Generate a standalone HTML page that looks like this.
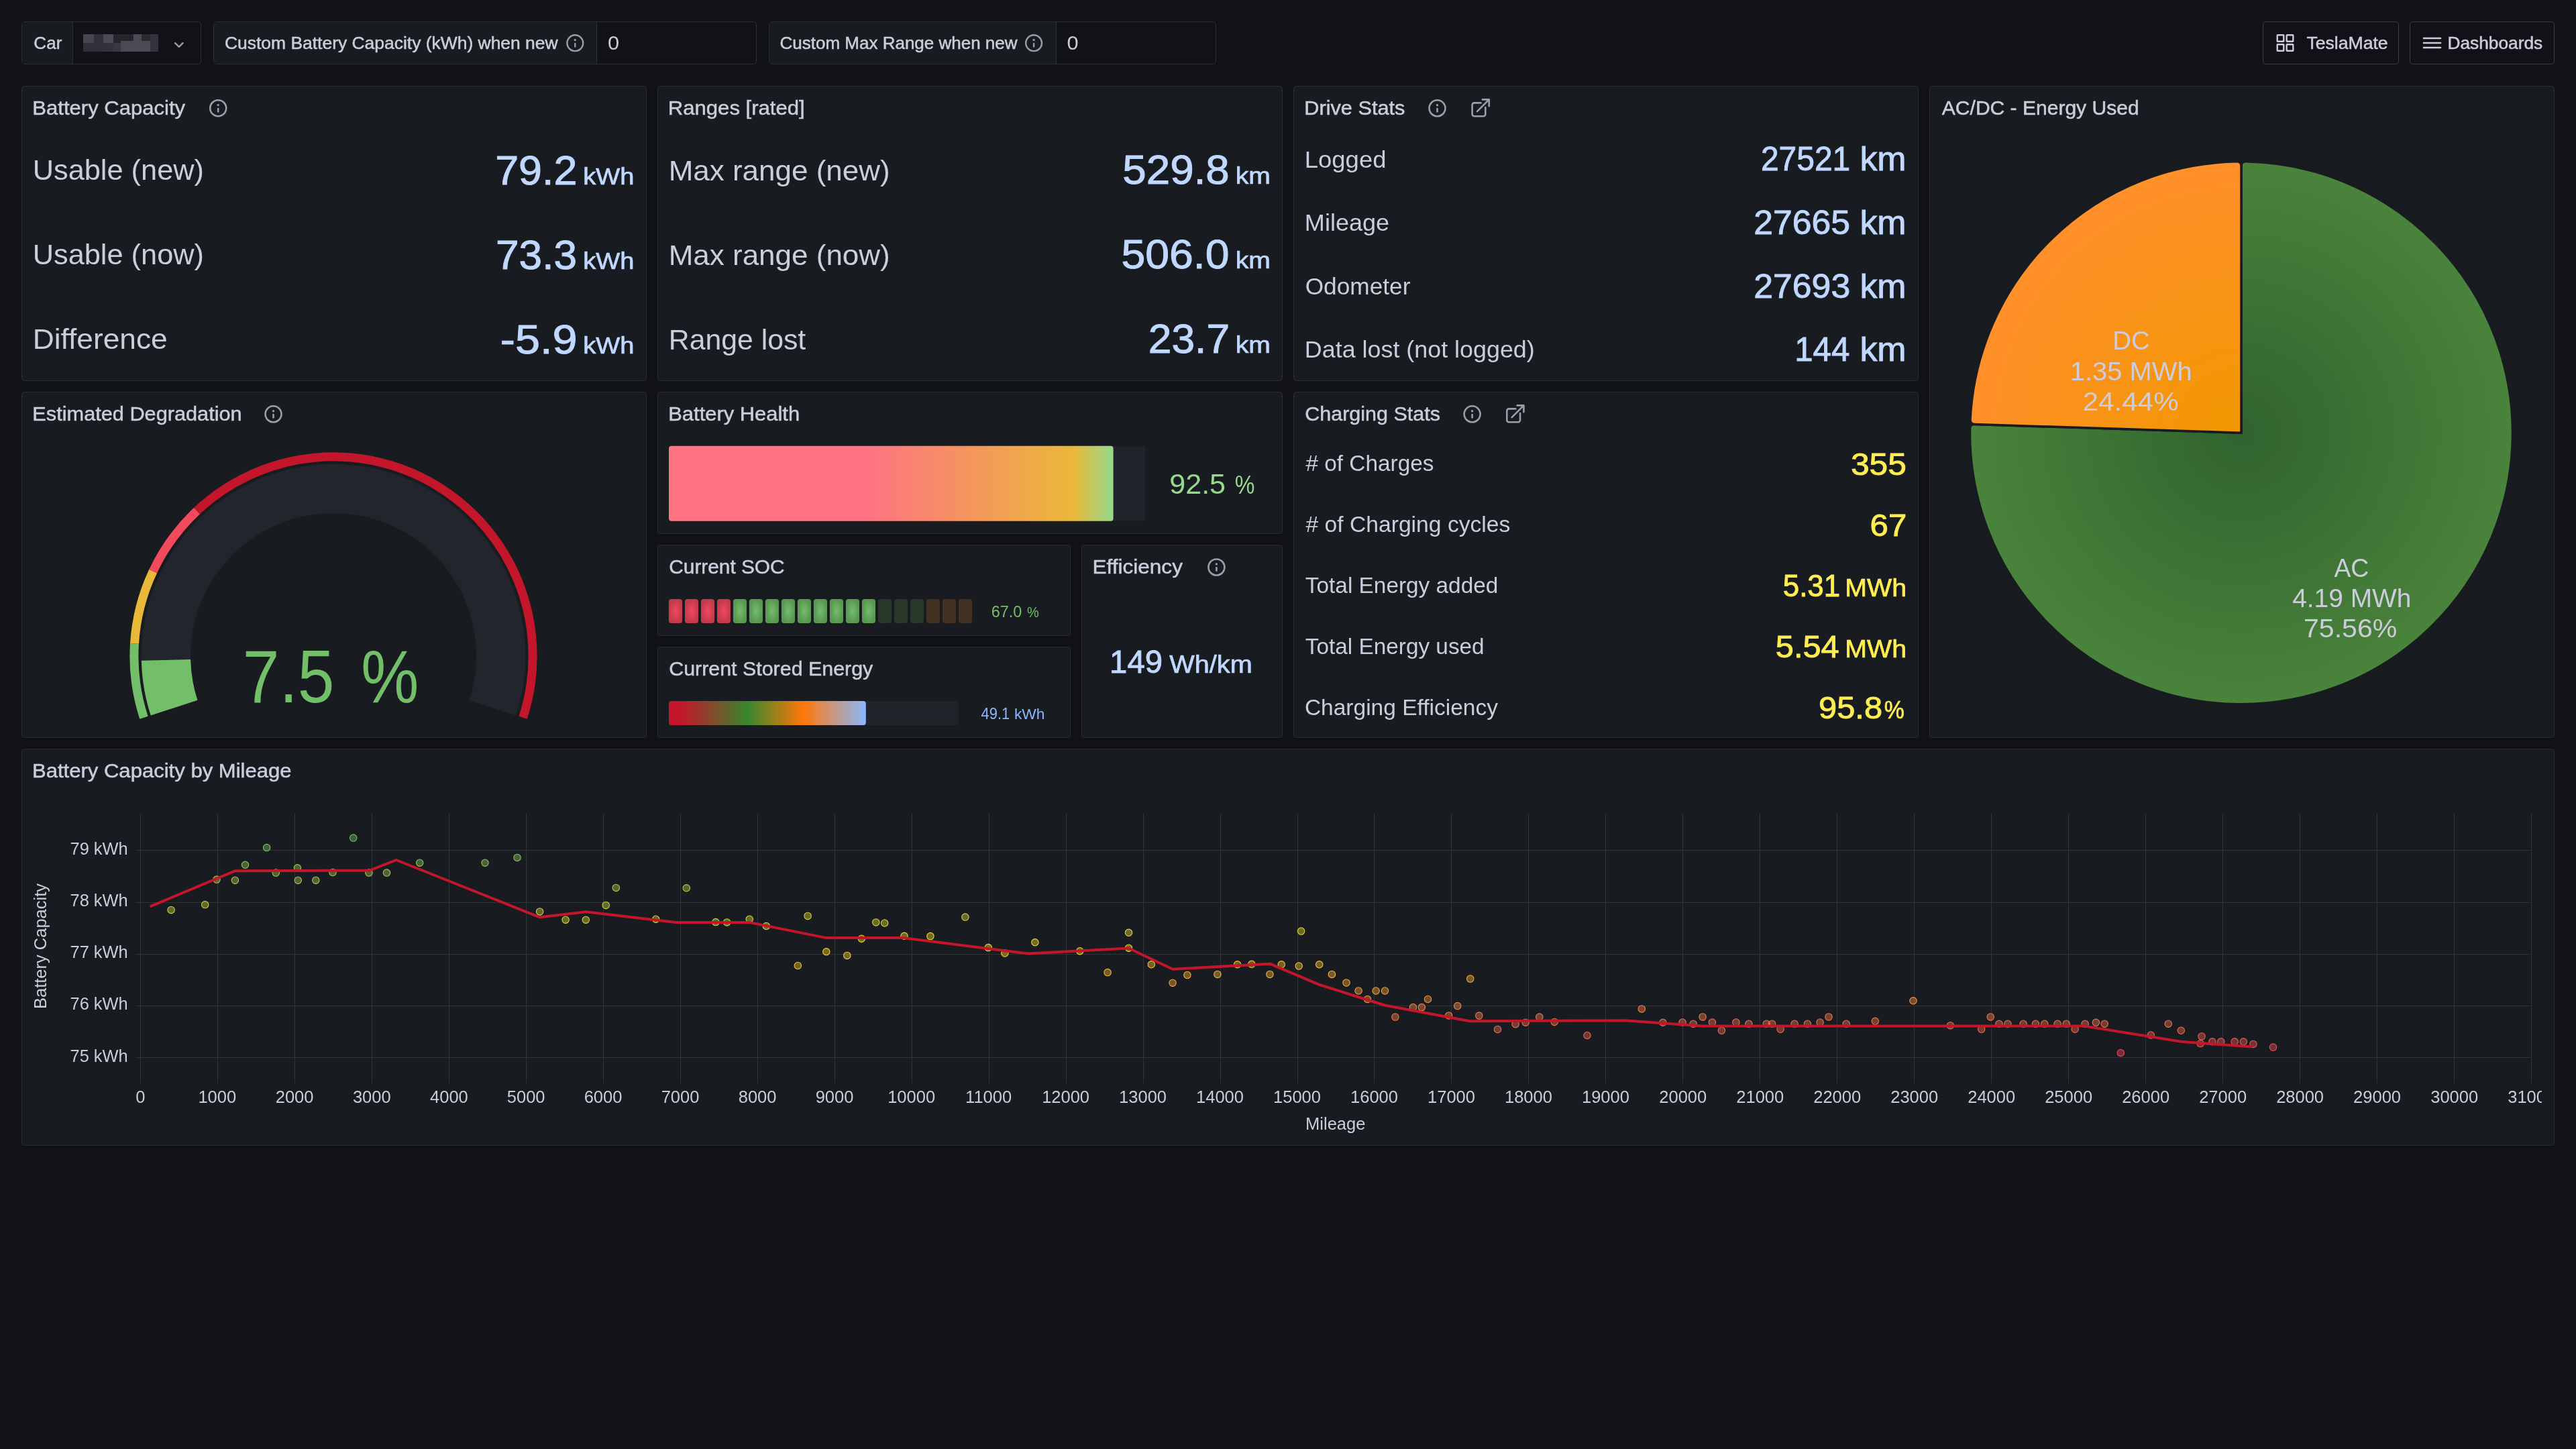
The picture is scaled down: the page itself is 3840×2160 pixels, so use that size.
<!DOCTYPE html>
<html><head><meta charset="utf-8"><title>Battery Health - TeslaMate</title>
<style>html,body{margin:0;padding:0;background:#111217;width:3840px;height:2160px;overflow:hidden}
svg{display:block;font-family:"Liberation Sans",sans-serif;will-change:transform}</style></head>
<body><svg width="3840" height="2160" viewBox="0 0 3840 2160">
<defs><linearGradient id="gh" x1="997" y1="0" x2="1659.6" y2="0" gradientUnits="userSpaceOnUse"><stop offset="0" stop-color="#ff7383"/><stop offset="0.44" stop-color="#ff7383"/><stop offset="0.91" stop-color="#eab839"/><stop offset="1" stop-color="#96d98d"/></linearGradient><radialGradient id="gr"><stop offset="0" stop-color="#f2495c"/><stop offset="1" stop-color="#c23a4b"/></radialGradient><radialGradient id="gg"><stop offset="0" stop-color="#73bf69"/><stop offset="1" stop-color="#5b9653"/></radialGradient><linearGradient id="ge" x1="997" y1="0" x2="1290.8" y2="0" gradientUnits="userSpaceOnUse"><stop offset="0" stop-color="#c4162a"/><stop offset="0.06" stop-color="#c4162a"/><stop offset="0.40" stop-color="#37872d"/><stop offset="0.68" stop-color="#ff780a"/><stop offset="1" stop-color="#8ab8ff"/></linearGradient><radialGradient id="pa" cx="3341.0" cy="645.3" r="404.5" gradientUnits="userSpaceOnUse"><stop offset="0" stop-color="#30632e"/><stop offset="1" stop-color="#4a833b"/></radialGradient><radialGradient id="pd" cx="3341.0" cy="645.3" r="404.5" gradientUnits="userSpaceOnUse"><stop offset="0" stop-color="#f29800"/><stop offset="1" stop-color="#ff8f2a"/></radialGradient></defs>
<rect x="0" y="0" width="3840" height="2160" fill="#111217"/>
<rect x="32.5" y="32.5" width="267" height="63" fill="#111217" rx="4" stroke="#2c2e34" stroke-width="1" />
<rect x="33" y="33" width="75.5" height="62" fill="#181b1f" />
<line x1="108.5" y1="33" x2="108.5" y2="95" stroke="#2c2e34" stroke-width="1"/>
<text x="50.38" y="73.00" font-size="25.50" fill="#ccccdc" textLength="41.95" lengthAdjust="spacingAndGlyphs" stroke="#ccccdc" stroke-width="0.5">Car</text>
<rect x="124" y="51" width="16" height="13" fill="#46464f" />
<rect x="140" y="51" width="14" height="13" fill="#30303a" />
<rect x="154" y="51" width="15" height="13" fill="#4a4a54" />
<rect x="169" y="51" width="11" height="13" fill="#25262c" />
<rect x="180" y="51" width="19" height="10" fill="#25262c" />
<rect x="199" y="51" width="12" height="10" fill="#4b4b55" />
<rect x="211" y="51" width="13" height="10" fill="#2a2b30" />
<rect x="224" y="51" width="12" height="26" fill="#33333d" />
<rect x="124" y="64" width="16" height="13" fill="#30303a" />
<rect x="140" y="64" width="14" height="13" fill="#30303a" />
<rect x="154" y="64" width="15" height="13" fill="#32323c" />
<rect x="169" y="64" width="11" height="13" fill="#383842" />
<rect x="180" y="61" width="44" height="16" fill="#4a4a54" />
<path d="M261,64.2 L266.8,69.8 L272.6,64.2" stroke="#9d9eab" stroke-width="2.3" fill="none" stroke-linecap="round" stroke-linejoin="round"/>
<rect x="318.5" y="32.5" width="809" height="63" fill="#111217" rx="4" stroke="#2c2e34" stroke-width="1" />
<rect x="319" y="33" width="570" height="62" fill="#181b1f" />
<line x1="889.5" y1="33" x2="889.5" y2="95" stroke="#2c2e34" stroke-width="1"/>
<text x="334.96" y="73.00" font-size="25.50" fill="#ccccdc" textLength="496.68" lengthAdjust="spacingAndGlyphs" stroke="#ccccdc" stroke-width="0.5">Custom Battery Capacity (kWh) when new</text>
<g stroke="#9d9eab" fill="none" stroke-width="2.4" stroke-linecap="round"><circle cx="857.3" cy="64.2" r="11.9"/><line x1="857.3" y1="65.0" x2="857.3" y2="69.4"/></g><circle cx="857.3" cy="59.6" r="1.7" fill="#9d9eab"/>
<text x="906.00" y="74.00" font-size="29.50" fill="#ccccdc" textLength="17.10" lengthAdjust="spacingAndGlyphs" >0</text>
<rect x="1146.5" y="32.5" width="666" height="63" fill="#111217" rx="4" stroke="#2c2e34" stroke-width="1" />
<rect x="1147" y="33" width="427" height="62" fill="#181b1f" />
<line x1="1574.5" y1="33" x2="1574.5" y2="95" stroke="#2c2e34" stroke-width="1"/>
<text x="1162.58" y="73.00" font-size="25.50" fill="#ccccdc" textLength="353.96" lengthAdjust="spacingAndGlyphs" stroke="#ccccdc" stroke-width="0.5">Custom Max Range when new</text>
<g stroke="#9d9eab" fill="none" stroke-width="2.4" stroke-linecap="round"><circle cx="1541.1" cy="64.2" r="11.9"/><line x1="1541.1" y1="65.0" x2="1541.1" y2="69.4"/></g><circle cx="1541.1" cy="59.6" r="1.7" fill="#9d9eab"/>
<text x="1590.60" y="74.00" font-size="29.50" fill="#ccccdc" textLength="17.10" lengthAdjust="spacingAndGlyphs" >0</text>
<rect x="3373.5" y="32.5" width="202" height="63" fill="none" rx="4" stroke="#3b3d44" stroke-width="1" />
<rect x="3592.5" y="32.5" width="215" height="63" fill="none" rx="4" stroke="#3b3d44" stroke-width="1" />
<rect x="3394.7" y="52.2" width="9.6" height="9.6" fill="none" rx="0.5" stroke="#ccccdc" stroke-width="2.4" />
<rect x="3408.7" y="52.2" width="9.6" height="9.6" fill="none" rx="0.5" stroke="#ccccdc" stroke-width="2.4" />
<rect x="3394.7" y="66.2" width="9.6" height="9.6" fill="none" rx="0.5" stroke="#ccccdc" stroke-width="2.4" />
<rect x="3408.7" y="66.2" width="9.6" height="9.6" fill="none" rx="0.5" stroke="#ccccdc" stroke-width="2.4" />
<text x="3438.50" y="73.00" font-size="25.50" fill="#ccccdc" textLength="121.08" lengthAdjust="spacingAndGlyphs" stroke="#ccccdc" stroke-width="0.5">TeslaMate</text>
<line x1="3613" y1="57" x2="3638" y2="57" stroke="#ccccdc" stroke-width="2.6" stroke-linecap="round"/>
<line x1="3613" y1="64" x2="3638" y2="64" stroke="#ccccdc" stroke-width="2.6" stroke-linecap="round"/>
<line x1="3613" y1="71" x2="3638" y2="71" stroke="#ccccdc" stroke-width="2.6" stroke-linecap="round"/>
<text x="3648.44" y="73.00" font-size="25.50" fill="#ccccdc" textLength="141.81" lengthAdjust="spacingAndGlyphs" stroke="#ccccdc" stroke-width="0.5">Dashboards</text>
<rect x="32.5" y="128.5" width="931" height="439" fill="#181b1f" rx="4" stroke="#2c2e34" stroke-width="1" />
<rect x="980.5" y="128.5" width="931" height="439" fill="#181b1f" rx="4" stroke="#2c2e34" stroke-width="1" />
<rect x="1928.5" y="128.5" width="931" height="439" fill="#181b1f" rx="4" stroke="#2c2e34" stroke-width="1" />
<rect x="2876.5" y="128.5" width="931" height="971" fill="#181b1f" rx="4" stroke="#2c2e34" stroke-width="1" />
<rect x="32.5" y="584.5" width="931" height="515" fill="#181b1f" rx="4" stroke="#2c2e34" stroke-width="1" />
<rect x="980.5" y="584.5" width="931" height="211" fill="#181b1f" rx="4" stroke="#2c2e34" stroke-width="1" />
<rect x="980.5" y="812.5" width="615" height="135" fill="#181b1f" rx="4" stroke="#2c2e34" stroke-width="1" />
<rect x="980.5" y="964.5" width="615" height="135" fill="#181b1f" rx="4" stroke="#2c2e34" stroke-width="1" />
<rect x="1612.5" y="812.5" width="299" height="287" fill="#181b1f" rx="4" stroke="#2c2e34" stroke-width="1" />
<rect x="1928.5" y="584.5" width="931" height="515" fill="#181b1f" rx="4" stroke="#2c2e34" stroke-width="1" />
<rect x="32.5" y="1116.5" width="3775" height="591" fill="#181b1f" rx="4" stroke="#2c2e34" stroke-width="1" />
<text x="48.35" y="171.00" font-size="29.50" fill="#ccccdc" textLength="227.71" lengthAdjust="spacingAndGlyphs" stroke="#ccccdc" stroke-width="0.5">Battery Capacity</text>
<g stroke="#9d9eab" fill="none" stroke-width="2.6" stroke-linecap="round"><circle cx="325.2" cy="161.2" r="12.0"/><line x1="325.2" y1="162.0" x2="325.2" y2="166.39999999999998"/></g><circle cx="325.2" cy="156.6" r="1.7" fill="#9d9eab"/>
<text x="995.75" y="171.00" font-size="29.50" fill="#ccccdc" textLength="203.97" lengthAdjust="spacingAndGlyphs" stroke="#ccccdc" stroke-width="0.5">Ranges [rated]</text>
<text x="1944.28" y="171.00" font-size="29.50" fill="#ccccdc" textLength="150.13" lengthAdjust="spacingAndGlyphs" stroke="#ccccdc" stroke-width="0.5">Drive Stats</text>
<g stroke="#9d9eab" fill="none" stroke-width="2.6" stroke-linecap="round"><circle cx="2142.5" cy="161.3" r="12.0"/><line x1="2142.5" y1="162.10000000000002" x2="2142.5" y2="166.5"/></g><circle cx="2142.5" cy="156.70000000000002" r="1.7" fill="#9d9eab"/>
<g stroke="#9d9eab" fill="none" stroke-width="2.6" stroke-linecap="round" stroke-linejoin="round"><path d="M2207.6,153.4 H2197.6 a3,3 0 0 0 -3,3 V170.20000000000002 a3,3 0 0 0 3,3 H2211.2999999999997 a3,3 0 0 0 3,-3 V160.0"/><path d="M2202.0,166.10000000000002 L2219.7,148.4 M2209.9,148.4 H2219.7 V158.20000000000002"/></g>
<text x="2894.84" y="171.00" font-size="29.50" fill="#ccccdc" textLength="293.79" lengthAdjust="spacingAndGlyphs" stroke="#ccccdc" stroke-width="0.5">AC/DC - Energy Used</text>
<text x="48.38" y="627.00" font-size="29.50" fill="#ccccdc" textLength="312.31" lengthAdjust="spacingAndGlyphs" stroke="#ccccdc" stroke-width="0.5">Estimated Degradation</text>
<g stroke="#9d9eab" fill="none" stroke-width="2.6" stroke-linecap="round"><circle cx="407.5" cy="617.3" r="12.0"/><line x1="407.5" y1="618.0999999999999" x2="407.5" y2="622.5"/></g><circle cx="407.5" cy="612.6999999999999" r="1.7" fill="#9d9eab"/>
<text x="996.26" y="627.00" font-size="29.50" fill="#ccccdc" textLength="195.84" lengthAdjust="spacingAndGlyphs" stroke="#ccccdc" stroke-width="0.5">Battery Health</text>
<text x="997.29" y="855.00" font-size="29.50" fill="#ccccdc" textLength="172.25" lengthAdjust="spacingAndGlyphs" stroke="#ccccdc" stroke-width="0.5">Current SOC</text>
<text x="997.26" y="1007.00" font-size="29.50" fill="#ccccdc" textLength="304.00" lengthAdjust="spacingAndGlyphs" stroke="#ccccdc" stroke-width="0.5">Current Stored Energy</text>
<text x="1628.41" y="855.00" font-size="29.50" fill="#ccccdc" textLength="134.55" lengthAdjust="spacingAndGlyphs" stroke="#ccccdc" stroke-width="0.5">Efficiency</text>
<g stroke="#9d9eab" fill="none" stroke-width="2.6" stroke-linecap="round"><circle cx="1813.4" cy="845.5" r="12.0"/><line x1="1813.4" y1="846.3" x2="1813.4" y2="850.7"/></g><circle cx="1813.4" cy="840.9" r="1.7" fill="#9d9eab"/>
<text x="1945.25" y="627.00" font-size="29.50" fill="#ccccdc" textLength="201.65" lengthAdjust="spacingAndGlyphs" stroke="#ccccdc" stroke-width="0.5">Charging Stats</text>
<g stroke="#9d9eab" fill="none" stroke-width="2.6" stroke-linecap="round"><circle cx="2194.6" cy="617.3" r="12.0"/><line x1="2194.6" y1="618.0999999999999" x2="2194.6" y2="622.5"/></g><circle cx="2194.6" cy="612.6999999999999" r="1.7" fill="#9d9eab"/>
<g stroke="#9d9eab" fill="none" stroke-width="2.6" stroke-linecap="round" stroke-linejoin="round"><path d="M2259.3,609.4 H2249.3 a3,3 0 0 0 -3,3 V626.1999999999999 a3,3 0 0 0 3,3 H2263.0 a3,3 0 0 0 3,-3 V616.0"/><path d="M2253.7000000000003,622.0999999999999 L2271.4,604.4 M2261.6000000000004,604.4 H2271.4 V614.1999999999999"/></g>
<text x="47.95" y="1159.00" font-size="29.50" fill="#ccccdc" textLength="386.63" lengthAdjust="spacingAndGlyphs" stroke="#ccccdc" stroke-width="0.5">Battery Capacity by Mileage</text>
<text x="48.66" y="268.00" font-size="42.50" fill="#ccccdc" textLength="255.33" lengthAdjust="spacingAndGlyphs" >Usable (new)</text>
<text x="48.66" y="394.00" font-size="42.50" fill="#ccccdc" textLength="255.33" lengthAdjust="spacingAndGlyphs" >Usable (now)</text>
<text x="48.67" y="520.00" font-size="42.50" fill="#ccccdc" textLength="201.00" lengthAdjust="spacingAndGlyphs" >Difference</text>
<text x="738.18" y="275.00" font-size="61.50" fill="#c0d8ff" textLength="122.28" lengthAdjust="spacingAndGlyphs"  stroke="#c0d8ff" stroke-width="1.0">79.2</text>
<text x="869.33" y="275.00" font-size="35.50" fill="#c0d8ff" textLength="76.14" lengthAdjust="spacingAndGlyphs"  stroke="#c0d8ff" stroke-width="0.7">kWh</text>
<text x="738.91" y="401.00" font-size="61.50" fill="#c0d8ff" textLength="121.13" lengthAdjust="spacingAndGlyphs"  stroke="#c0d8ff" stroke-width="1.0">73.3</text>
<text x="869.33" y="401.00" font-size="35.50" fill="#c0d8ff" textLength="76.14" lengthAdjust="spacingAndGlyphs"  stroke="#c0d8ff" stroke-width="0.7">kWh</text>
<text x="745.74" y="527.00" font-size="61.50" fill="#c0d8ff" textLength="114.71" lengthAdjust="spacingAndGlyphs"  stroke="#c0d8ff" stroke-width="1.0">-5.9</text>
<text x="869.33" y="527.00" font-size="35.50" fill="#c0d8ff" textLength="76.14" lengthAdjust="spacingAndGlyphs"  stroke="#c0d8ff" stroke-width="0.7">kWh</text>
<text x="996.69" y="268.50" font-size="42.50" fill="#ccccdc" textLength="329.93" lengthAdjust="spacingAndGlyphs" >Max range (new)</text>
<text x="996.69" y="394.50" font-size="42.50" fill="#ccccdc" textLength="330.04" lengthAdjust="spacingAndGlyphs" >Max range (now)</text>
<text x="996.79" y="520.50" font-size="42.50" fill="#ccccdc" textLength="204.42" lengthAdjust="spacingAndGlyphs" >Range lost</text>
<text x="1673.35" y="274.00" font-size="61.50" fill="#c0d8ff" textLength="159.42" lengthAdjust="spacingAndGlyphs"  stroke="#c0d8ff" stroke-width="1.0">529.8</text>
<text x="1841.76" y="274.00" font-size="35.50" fill="#c0d8ff" textLength="52.22" lengthAdjust="spacingAndGlyphs"  stroke="#c0d8ff" stroke-width="0.7">km</text>
<text x="1671.42" y="400.00" font-size="61.50" fill="#c0d8ff" textLength="161.09" lengthAdjust="spacingAndGlyphs"  stroke="#c0d8ff" stroke-width="1.0">506.0</text>
<text x="1841.76" y="400.00" font-size="35.50" fill="#c0d8ff" textLength="52.22" lengthAdjust="spacingAndGlyphs"  stroke="#c0d8ff" stroke-width="0.7">km</text>
<text x="1711.76" y="526.00" font-size="61.50" fill="#c0d8ff" textLength="121.37" lengthAdjust="spacingAndGlyphs"  stroke="#c0d8ff" stroke-width="1.0">23.7</text>
<text x="1841.76" y="526.00" font-size="35.50" fill="#c0d8ff" textLength="52.22" lengthAdjust="spacingAndGlyphs"  stroke="#c0d8ff" stroke-width="0.7">km</text>
<text x="1944.81" y="250.00" font-size="35.00" fill="#ccccdc" textLength="121.64" lengthAdjust="spacingAndGlyphs" >Logged</text>
<text x="1944.84" y="344.00" font-size="35.00" fill="#ccccdc" textLength="126.36" lengthAdjust="spacingAndGlyphs" >Mileage</text>
<text x="1945.63" y="439.00" font-size="35.00" fill="#ccccdc" textLength="156.86" lengthAdjust="spacingAndGlyphs" >Odometer</text>
<text x="1944.86" y="533.00" font-size="35.00" fill="#ccccdc" textLength="342.87" lengthAdjust="spacingAndGlyphs" >Data lost (not logged)</text>
<text x="2624.89" y="254.00" font-size="50.00" fill="#c0d8ff" textLength="133.35" lengthAdjust="spacingAndGlyphs"  stroke="#c0d8ff" stroke-width="0.9">27521</text>
<text x="2772.41" y="254.00" font-size="50.00" fill="#c0d8ff" textLength="69.11" lengthAdjust="spacingAndGlyphs"  stroke="#c0d8ff" stroke-width="0.9">km</text>
<text x="2614.30" y="349.00" font-size="50.00" fill="#c0d8ff" textLength="143.77" lengthAdjust="spacingAndGlyphs"  stroke="#c0d8ff" stroke-width="0.9">27665</text>
<text x="2772.41" y="349.00" font-size="50.00" fill="#c0d8ff" textLength="69.11" lengthAdjust="spacingAndGlyphs"  stroke="#c0d8ff" stroke-width="0.9">km</text>
<text x="2614.30" y="443.50" font-size="50.00" fill="#c0d8ff" textLength="143.88" lengthAdjust="spacingAndGlyphs"  stroke="#c0d8ff" stroke-width="0.9">27693</text>
<text x="2772.41" y="443.50" font-size="50.00" fill="#c0d8ff" textLength="69.11" lengthAdjust="spacingAndGlyphs"  stroke="#c0d8ff" stroke-width="0.9">km</text>
<text x="2675.25" y="538.00" font-size="50.00" fill="#c0d8ff" textLength="82.09" lengthAdjust="spacingAndGlyphs"  stroke="#c0d8ff" stroke-width="0.9">144</text>
<text x="2772.41" y="538.00" font-size="50.00" fill="#c0d8ff" textLength="69.11" lengthAdjust="spacingAndGlyphs"  stroke="#c0d8ff" stroke-width="0.9">km</text>
<text x="1946.45" y="702.00" font-size="33.50" fill="#ccccdc" textLength="191.05" lengthAdjust="spacingAndGlyphs" ># of Charges</text>
<text x="1946.45" y="793.00" font-size="33.50" fill="#ccccdc" textLength="304.96" lengthAdjust="spacingAndGlyphs" ># of Charging cycles</text>
<text x="1945.85" y="884.00" font-size="33.50" fill="#ccccdc" textLength="287.50" lengthAdjust="spacingAndGlyphs" >Total Energy added</text>
<text x="1945.85" y="975.00" font-size="33.50" fill="#ccccdc" textLength="266.80" lengthAdjust="spacingAndGlyphs" >Total Energy used</text>
<text x="1944.90" y="1066.00" font-size="33.50" fill="#ccccdc" >Charging Efficiency</text>
<text x="2759.01" y="708.00" font-size="46.50" fill="#ffee52" textLength="82.88" lengthAdjust="spacingAndGlyphs"  stroke="#ffee52" stroke-width="0.9">355</text>
<text x="2787.60" y="799.00" font-size="46.50" fill="#ffee52" textLength="54.67" lengthAdjust="spacingAndGlyphs"  stroke="#ffee52" stroke-width="0.9">67</text>
<text x="2657.74" y="889.00" font-size="46.50" fill="#ffee52" textLength="85.40" lengthAdjust="spacingAndGlyphs"  stroke="#ffee52" stroke-width="0.9">5.31</text>
<text x="2750.27" y="889.00" font-size="36.00" fill="#ffee52" textLength="91.78" lengthAdjust="spacingAndGlyphs"  stroke="#ffee52" stroke-width="0.7">MWh</text>
<text x="2646.85" y="980.00" font-size="46.50" fill="#ffee52" textLength="94.67" lengthAdjust="spacingAndGlyphs"  stroke="#ffee52" stroke-width="0.9">5.54</text>
<text x="2750.27" y="980.00" font-size="36.00" fill="#ffee52" textLength="91.78" lengthAdjust="spacingAndGlyphs"  stroke="#ffee52" stroke-width="0.7">MWh</text>
<text x="2711.11" y="1071.00" font-size="46.50" fill="#ffee52" textLength="94.90" lengthAdjust="spacingAndGlyphs"  stroke="#ffee52" stroke-width="0.9">95.8</text>
<text x="2808.70" y="1071.00" font-size="36.00" fill="#ffee52" textLength="30.01" lengthAdjust="spacingAndGlyphs"  stroke="#ffee52" stroke-width="0.7">%</text>
<path d="M259.57,1055.15 A249.65,249.65 0 1 1 734.43,1055.15" stroke="#22252b" stroke-width="73.3" fill="none"/>
<path d="M259.57,1055.15 A249.65,249.65 0 0 1 247.42,983.96" stroke="#73bf69" stroke-width="73.3" fill="none"/>
<path d="M214.44,1069.81 A297.1,297.1 0 0 1 200.49,959.34" stroke="#73bf69" stroke-width="13.0" fill="none"/>
<path d="M200.49,959.34 A297.1,297.1 0 0 1 228.18,851.50" stroke="#eab839" stroke-width="13.0" fill="none"/>
<path d="M228.18,851.50 A297.1,297.1 0 0 1 293.62,761.42" stroke="#f2495c" stroke-width="13.0" fill="none"/>
<path d="M293.62,761.42 A297.1,297.1 0 0 1 779.56,1069.81" stroke="#c4162a" stroke-width="13.0" fill="none"/>
<text x="361.86" y="1046.50" font-size="111.00" fill="#73bf69" textLength="136.67" lengthAdjust="spacingAndGlyphs" >7.5</text>
<text x="538.15" y="1046.50" font-size="111.00" fill="#73bf69" textLength="86.10" lengthAdjust="spacingAndGlyphs" >%</text>
<rect x="997" y="664.7" width="710.5" height="112" fill="#202329" rx="4" />
<rect x="997" y="664.7" width="662.6" height="112" fill="url(#gh)" rx="4" />
<text x="1743.18" y="736.00" font-size="42.50" fill="#96d98d" textLength="83.93" lengthAdjust="spacingAndGlyphs" >92.5</text>
<text x="1840.71" y="736.00" font-size="38.00" fill="#96d98d" textLength="29.68" lengthAdjust="spacingAndGlyphs" >%</text>
<rect x="996.90" y="893.1" width="20.1" height="35.8" fill="url(#gr)" rx="4" />
<rect x="1020.90" y="893.1" width="20.1" height="35.8" fill="url(#gr)" rx="4" />
<rect x="1044.90" y="893.1" width="20.1" height="35.8" fill="url(#gr)" rx="4" />
<rect x="1068.90" y="893.1" width="20.1" height="35.8" fill="url(#gr)" rx="4" />
<rect x="1092.90" y="893.1" width="20.1" height="35.8" fill="url(#gg)" rx="4" />
<rect x="1116.90" y="893.1" width="20.1" height="35.8" fill="url(#gg)" rx="4" />
<rect x="1140.90" y="893.1" width="20.1" height="35.8" fill="url(#gg)" rx="4" />
<rect x="1164.90" y="893.1" width="20.1" height="35.8" fill="url(#gg)" rx="4" />
<rect x="1188.90" y="893.1" width="20.1" height="35.8" fill="url(#gg)" rx="4" />
<rect x="1212.90" y="893.1" width="20.1" height="35.8" fill="url(#gg)" rx="4" />
<rect x="1236.90" y="893.1" width="20.1" height="35.8" fill="url(#gg)" rx="4" />
<rect x="1260.90" y="893.1" width="20.1" height="35.8" fill="url(#gg)" rx="4" />
<rect x="1284.90" y="893.1" width="20.1" height="35.8" fill="url(#gg)" rx="4" />
<rect x="1308.90" y="893.1" width="20.1" height="35.8" fill="#27382b" rx="4" />
<rect x="1332.90" y="893.1" width="20.1" height="35.8" fill="#27382b" rx="4" />
<rect x="1356.90" y="893.1" width="20.1" height="35.8" fill="#27382b" rx="4" />
<rect x="1380.90" y="893.1" width="20.1" height="35.8" fill="#433221" rx="4" />
<rect x="1404.90" y="893.1" width="20.1" height="35.8" fill="#433221" rx="4" />
<rect x="1428.90" y="893.1" width="20.1" height="35.8" fill="#433221" rx="4" />
<text x="1477.71" y="920.00" font-size="24.00" fill="#73bf69" textLength="45.61" lengthAdjust="spacingAndGlyphs" >67.0</text>
<text x="1531.09" y="920.00" font-size="22.00" fill="#73bf69" textLength="17.72" lengthAdjust="spacingAndGlyphs" >%</text>
<rect x="997" y="1045" width="432" height="36" fill="#202329" rx="4" />
<rect x="997" y="1045" width="293.8" height="36" fill="url(#ge)" rx="4" />
<text x="1462.60" y="1072.00" font-size="24.00" fill="#8ab8ff" textLength="42.57" lengthAdjust="spacingAndGlyphs" >49.1</text>
<text x="1511.97" y="1072.00" font-size="22.00" fill="#8ab8ff" textLength="45.51" lengthAdjust="spacingAndGlyphs" >kWh</text>
<text x="1654.10" y="1003.00" font-size="48.50" fill="#c0d8ff" textLength="78.95" lengthAdjust="spacingAndGlyphs"  stroke="#c0d8ff" stroke-width="0.9">149</text>
<text x="1743.23" y="1003.00" font-size="37.00" fill="#c0d8ff" textLength="123.49" lengthAdjust="spacingAndGlyphs"  stroke="#c0d8ff" stroke-width="0.7">Wh/km</text>
<path d="M3341.0,645.3 L3341.00,247.80 Q3341.00,240.80 3348.00,240.86 A404.5,404.5 0 1 1 2936.55,639.24 Q2936.71,632.24 2943.71,632.47 Z" fill="url(#pa)" stroke="#181b1f" stroke-width="3.5" stroke-linejoin="round"/>
<path d="M3341.0,645.3 L2943.71,632.47 Q2936.71,632.24 2937.00,625.25 A404.5,404.5 0 0 1 3334.00,240.86 Q3341.00,240.80 3341.00,247.80 Z" fill="url(#pd)" stroke="#181b1f" stroke-width="3.5" stroke-linejoin="round"/>
<text x="3149.25" y="521.10" font-size="39.00" fill="#ccccdc" textLength="55.41" lengthAdjust="spacingAndGlyphs" >DC</text>
<text x="3085.76" y="567.00" font-size="39.00" fill="#ccccdc" textLength="182.04" lengthAdjust="spacingAndGlyphs" >1.35 MWh</text>
<text x="3104.73" y="611.60" font-size="39.00" fill="#ccccdc" textLength="142.92" lengthAdjust="spacingAndGlyphs" >24.44%</text>
<text x="3479.43" y="859.90" font-size="39.00" fill="#ccccdc" textLength="51.90" lengthAdjust="spacingAndGlyphs" >AC</text>
<text x="3417.16" y="904.90" font-size="39.00" fill="#ccccdc" textLength="177.32" lengthAdjust="spacingAndGlyphs" >4.19 MWh</text>
<text x="3434.04" y="949.90" font-size="39.00" fill="#ccccdc" textLength="139.27" lengthAdjust="spacingAndGlyphs" >75.56%</text>
<path d="M209.5,1213V1615 M324.5,1213V1615 M439.5,1213V1615 M554.5,1213V1615 M669.5,1213V1615 M784.5,1213V1615 M899.5,1213V1615 M1014.5,1213V1615 M1129.5,1213V1615 M1244.5,1213V1615 M1359.5,1213V1615 M1474.5,1213V1615 M1589.5,1213V1615 M1704.5,1213V1615 M1819.5,1213V1615 M1934.5,1213V1615 M2048.5,1213V1615 M2163.5,1213V1615 M2278.5,1213V1615 M2393.5,1213V1615 M2508.5,1213V1615 M2623.5,1213V1615 M2738.5,1213V1615 M2853.5,1213V1615 M2968.5,1213V1615 M3083.5,1213V1615 M3198.5,1213V1615 M3313.5,1213V1615 M3428.5,1213V1615 M3543.5,1213V1615 M3658.5,1213V1615 M3773.5,1213V1615 M202,1267.5H3773 M202,1345.5H3773 M202,1422.5H3773 M202,1499.5H3773 M202,1576.5H3773" stroke="#303338" stroke-width="1" fill="none"/>
<text x="104.50" y="1273.50" font-size="25.50" fill="#ccccdc" textLength="86.26" lengthAdjust="spacingAndGlyphs" >79 kWh</text>
<text x="104.50" y="1350.75" font-size="25.50" fill="#ccccdc" textLength="86.26" lengthAdjust="spacingAndGlyphs" >78 kWh</text>
<text x="104.50" y="1428.00" font-size="25.50" fill="#ccccdc" textLength="86.26" lengthAdjust="spacingAndGlyphs" >77 kWh</text>
<text x="104.50" y="1505.25" font-size="25.50" fill="#ccccdc" textLength="86.26" lengthAdjust="spacingAndGlyphs" >76 kWh</text>
<text x="104.50" y="1582.50" font-size="25.50" fill="#ccccdc" textLength="86.26" lengthAdjust="spacingAndGlyphs" >75 kWh</text>
<defs><clipPath id="cc"><rect x="32" y="1116" width="3757" height="592"/></clipPath></defs>
<g clip-path="url(#cc)">
<text x="202.21" y="1644.00" font-size="25.50" fill="#ccccdc" >0</text>
<text x="295.44" y="1644.00" font-size="25.50" fill="#ccccdc" >1000</text>
<text x="410.75" y="1644.00" font-size="25.50" fill="#ccccdc" >2000</text>
<text x="525.89" y="1644.00" font-size="25.50" fill="#ccccdc" >3000</text>
<text x="641.06" y="1644.00" font-size="25.50" fill="#ccccdc" >4000</text>
<text x="755.82" y="1644.00" font-size="25.50" fill="#ccccdc" >5000</text>
<text x="870.67" y="1644.00" font-size="25.50" fill="#ccccdc" >6000</text>
<text x="985.64" y="1644.00" font-size="25.50" fill="#ccccdc" >7000</text>
<text x="1100.72" y="1644.00" font-size="25.50" fill="#ccccdc" >8000</text>
<text x="1215.66" y="1644.00" font-size="25.50" fill="#ccccdc" >9000</text>
<text x="1323.17" y="1644.00" font-size="25.50" fill="#ccccdc" >10000</text>
<text x="1439.10" y="1644.00" font-size="25.50" fill="#ccccdc" >11000</text>
<text x="1553.13" y="1644.00" font-size="25.50" fill="#ccccdc" >12000</text>
<text x="1668.11" y="1644.00" font-size="25.50" fill="#ccccdc" >13000</text>
<text x="1783.09" y="1644.00" font-size="25.50" fill="#ccccdc" >14000</text>
<text x="1898.07" y="1644.00" font-size="25.50" fill="#ccccdc" >15000</text>
<text x="2013.05" y="1644.00" font-size="25.50" fill="#ccccdc" >16000</text>
<text x="2128.03" y="1644.00" font-size="25.50" fill="#ccccdc" >17000</text>
<text x="2243.01" y="1644.00" font-size="25.50" fill="#ccccdc" >18000</text>
<text x="2357.99" y="1644.00" font-size="25.50" fill="#ccccdc" >19000</text>
<text x="2473.30" y="1644.00" font-size="25.50" fill="#ccccdc" >20000</text>
<text x="2588.28" y="1644.00" font-size="25.50" fill="#ccccdc" >21000</text>
<text x="2703.26" y="1644.00" font-size="25.50" fill="#ccccdc" >22000</text>
<text x="2818.24" y="1644.00" font-size="25.50" fill="#ccccdc" >23000</text>
<text x="2933.22" y="1644.00" font-size="25.50" fill="#ccccdc" >24000</text>
<text x="3048.20" y="1644.00" font-size="25.50" fill="#ccccdc" >25000</text>
<text x="3163.18" y="1644.00" font-size="25.50" fill="#ccccdc" >26000</text>
<text x="3278.16" y="1644.00" font-size="25.50" fill="#ccccdc" >27000</text>
<text x="3393.14" y="1644.00" font-size="25.50" fill="#ccccdc" >28000</text>
<text x="3508.12" y="1644.00" font-size="25.50" fill="#ccccdc" >29000</text>
<text x="3623.26" y="1644.00" font-size="25.50" fill="#ccccdc" >30000</text>
<text x="3738.24" y="1644.00" font-size="25.50" fill="#ccccdc" >31000</text>
</g>
<text x="1946.07" y="1684.00" font-size="25.50" fill="#ccccdc" >Mileage</text>
<g transform="translate(68.6,1409.5) rotate(-90)">
<text x="-94.56" y="0" font-size="25.5" fill="#ccccdc">Battery Capacity</text>
</g>
<g><circle cx="255.1" cy="1356.4" r="5.2" fill="#cdd43f" fill-opacity="0.42" stroke="#cdd43f" stroke-width="1.1"/><circle cx="305.7" cy="1348.6" r="5.2" fill="#c7d242" fill-opacity="0.42" stroke="#c7d242" stroke-width="1.1"/><circle cx="323" cy="1311.1" r="5.2" fill="#a7cb51" fill-opacity="0.42" stroke="#a7cb51" stroke-width="1.1"/><circle cx="350.4" cy="1312.2" r="5.2" fill="#a8cb50" fill-opacity="0.42" stroke="#a8cb50" stroke-width="1.1"/><circle cx="365.5" cy="1289.3" r="5.2" fill="#95c759" fill-opacity="0.42" stroke="#95c759" stroke-width="1.1"/><circle cx="397.6" cy="1263.6" r="5.2" fill="#7fc263" fill-opacity="0.42" stroke="#7fc263" stroke-width="1.1"/><circle cx="411.3" cy="1301.1" r="5.2" fill="#9fc955" fill-opacity="0.42" stroke="#9fc955" stroke-width="1.1"/><circle cx="443.4" cy="1293.8" r="5.2" fill="#99c857" fill-opacity="0.42" stroke="#99c857" stroke-width="1.1"/><circle cx="444.3" cy="1312.2" r="5.2" fill="#a8cb50" fill-opacity="0.42" stroke="#a8cb50" stroke-width="1.1"/><circle cx="470.8" cy="1312.2" r="5.2" fill="#a8cb50" fill-opacity="0.42" stroke="#a8cb50" stroke-width="1.1"/><circle cx="496" cy="1300.5" r="5.2" fill="#9ec955" fill-opacity="0.42" stroke="#9ec955" stroke-width="1.1"/><circle cx="526.7" cy="1249.1" r="5.2" fill="#73bf69" fill-opacity="0.42" stroke="#73bf69" stroke-width="1.1"/><circle cx="549.9" cy="1301.1" r="5.2" fill="#9fc955" fill-opacity="0.42" stroke="#9fc955" stroke-width="1.1"/><circle cx="576.5" cy="1301.1" r="5.2" fill="#9fc955" fill-opacity="0.42" stroke="#9fc955" stroke-width="1.1"/><circle cx="625.7" cy="1286.2" r="5.2" fill="#92c65a" fill-opacity="0.42" stroke="#92c65a" stroke-width="1.1"/><circle cx="723" cy="1286.2" r="5.2" fill="#92c65a" fill-opacity="0.42" stroke="#92c65a" stroke-width="1.1"/><circle cx="771" cy="1278.4" r="5.2" fill="#8cc55d" fill-opacity="0.42" stroke="#8cc55d" stroke-width="1.1"/><circle cx="804.6" cy="1358.9" r="5.2" fill="#d0d43e" fill-opacity="0.42" stroke="#d0d43e" stroke-width="1.1"/><circle cx="843.1" cy="1371.2" r="5.2" fill="#dad739" fill-opacity="0.42" stroke="#dad739" stroke-width="1.1"/><circle cx="873.3" cy="1371.2" r="5.2" fill="#dad739" fill-opacity="0.42" stroke="#dad739" stroke-width="1.1"/><circle cx="903.2" cy="1349.4" r="5.2" fill="#c8d242" fill-opacity="0.42" stroke="#c8d242" stroke-width="1.1"/><circle cx="918.3" cy="1323.4" r="5.2" fill="#b2cd4c" fill-opacity="0.42" stroke="#b2cd4c" stroke-width="1.1"/><circle cx="1023.3" cy="1323.8" r="5.2" fill="#b2cd4c" fill-opacity="0.42" stroke="#b2cd4c" stroke-width="1.1"/><circle cx="977.7" cy="1370.2" r="5.2" fill="#d9d639" fill-opacity="0.42" stroke="#d9d639" stroke-width="1.1"/><circle cx="1066.9" cy="1374.6" r="5.2" fill="#ddd738" fill-opacity="0.42" stroke="#ddd738" stroke-width="1.1"/><circle cx="1083.6" cy="1374.9" r="5.2" fill="#ddd738" fill-opacity="0.42" stroke="#ddd738" stroke-width="1.1"/><circle cx="1117.2" cy="1370.2" r="5.2" fill="#d9d639" fill-opacity="0.42" stroke="#d9d639" stroke-width="1.1"/><circle cx="1142.3" cy="1380.5" r="5.2" fill="#e2d835" fill-opacity="0.42" stroke="#e2d835" stroke-width="1.1"/><circle cx="1204.1" cy="1365.4" r="5.2" fill="#d5d63b" fill-opacity="0.42" stroke="#d5d63b" stroke-width="1.1"/><circle cx="1189.3" cy="1439.5" r="5.2" fill="#f8c233" fill-opacity="0.42" stroke="#f8c233" stroke-width="1.1"/><circle cx="1231.8" cy="1418.8" r="5.2" fill="#fad52d" fill-opacity="0.42" stroke="#fad52d" stroke-width="1.1"/><circle cx="1262.8" cy="1424.4" r="5.2" fill="#f9d02f" fill-opacity="0.42" stroke="#f9d02f" stroke-width="1.1"/><circle cx="1284.3" cy="1399.2" r="5.2" fill="#f1dc2e" fill-opacity="0.42" stroke="#f1dc2e" stroke-width="1.1"/><circle cx="1305.8" cy="1374.9" r="5.2" fill="#ddd738" fill-opacity="0.42" stroke="#ddd738" stroke-width="1.1"/><circle cx="1318.7" cy="1376" r="5.2" fill="#ded837" fill-opacity="0.42" stroke="#ded837" stroke-width="1.1"/><circle cx="1348" cy="1395.3" r="5.2" fill="#eedb30" fill-opacity="0.42" stroke="#eedb30" stroke-width="1.1"/><circle cx="1386.9" cy="1395.6" r="5.2" fill="#eedb2f" fill-opacity="0.42" stroke="#eedb2f" stroke-width="1.1"/><circle cx="1438.9" cy="1367.1" r="5.2" fill="#d6d63b" fill-opacity="0.42" stroke="#d6d63b" stroke-width="1.1"/><circle cx="1473.3" cy="1412.6" r="5.2" fill="#fadb2b" fill-opacity="0.42" stroke="#fadb2b" stroke-width="1.1"/><circle cx="1497.9" cy="1421" r="5.2" fill="#f9d32e" fill-opacity="0.42" stroke="#f9d32e" stroke-width="1.1"/><circle cx="1542.9" cy="1404.8" r="5.2" fill="#f6dd2c" fill-opacity="0.42" stroke="#f6dd2c" stroke-width="1.1"/><circle cx="1609.7" cy="1417.7" r="5.2" fill="#fad62d" fill-opacity="0.42" stroke="#fad62d" stroke-width="1.1"/><circle cx="1682.5" cy="1390.3" r="5.2" fill="#eada31" fill-opacity="0.42" stroke="#eada31" stroke-width="1.1"/><circle cx="1682.5" cy="1413.2" r="5.2" fill="#fada2b" fill-opacity="0.42" stroke="#fada2b" stroke-width="1.1"/><circle cx="1651.1" cy="1449.6" r="5.2" fill="#f8b937" fill-opacity="0.42" stroke="#f8b937" stroke-width="1.1"/><circle cx="1716.3" cy="1437.8" r="5.2" fill="#f9c333" fill-opacity="0.42" stroke="#f9c333" stroke-width="1.1"/><circle cx="1748.1" cy="1465.2" r="5.2" fill="#f7aa3b" fill-opacity="0.42" stroke="#f7aa3b" stroke-width="1.1"/><circle cx="1769.9" cy="1453.5" r="5.2" fill="#f8b538" fill-opacity="0.42" stroke="#f8b538" stroke-width="1.1"/><circle cx="1814.9" cy="1452.4" r="5.2" fill="#f8b637" fill-opacity="0.42" stroke="#f8b637" stroke-width="1.1"/><circle cx="1844.6" cy="1437.8" r="5.2" fill="#f9c333" fill-opacity="0.42" stroke="#f9c333" stroke-width="1.1"/><circle cx="1865.8" cy="1437.3" r="5.2" fill="#f9c433" fill-opacity="0.42" stroke="#f9c433" stroke-width="1.1"/><circle cx="1892.9" cy="1452.4" r="5.2" fill="#f8b637" fill-opacity="0.42" stroke="#f8b637" stroke-width="1.1"/><circle cx="1910.2" cy="1437.8" r="5.2" fill="#f9c333" fill-opacity="0.42" stroke="#f9c333" stroke-width="1.1"/><circle cx="1936.2" cy="1440.1" r="5.2" fill="#f8c134" fill-opacity="0.42" stroke="#f8c134" stroke-width="1.1"/><circle cx="1939.6" cy="1388.1" r="5.2" fill="#e8da32" fill-opacity="0.42" stroke="#e8da32" stroke-width="1.1"/><circle cx="1966.7" cy="1437.8" r="5.2" fill="#f9c333" fill-opacity="0.42" stroke="#f9c333" stroke-width="1.1"/><circle cx="1985.4" cy="1452.4" r="5.2" fill="#f8b637" fill-opacity="0.42" stroke="#f8b637" stroke-width="1.1"/><circle cx="2007" cy="1464.9" r="5.2" fill="#f7aa3b" fill-opacity="0.42" stroke="#f7aa3b" stroke-width="1.1"/><circle cx="2025.1" cy="1477" r="5.2" fill="#f79f3f" fill-opacity="0.42" stroke="#f79f3f" stroke-width="1.1"/><circle cx="2038.5" cy="1489.5" r="5.2" fill="#f69343" fill-opacity="0.42" stroke="#f69343" stroke-width="1.1"/><circle cx="2051.1" cy="1477" r="5.2" fill="#f79f3f" fill-opacity="0.42" stroke="#f79f3f" stroke-width="1.1"/><circle cx="2064.5" cy="1477" r="5.2" fill="#f79f3f" fill-opacity="0.42" stroke="#f79f3f" stroke-width="1.1"/><circle cx="2079.9" cy="1516.1" r="5.2" fill="#f57b4b" fill-opacity="0.42" stroke="#f57b4b" stroke-width="1.1"/><circle cx="2106.5" cy="1501.6" r="5.2" fill="#f58847" fill-opacity="0.42" stroke="#f58847" stroke-width="1.1"/><circle cx="2119.3" cy="1501.6" r="5.2" fill="#f58847" fill-opacity="0.42" stroke="#f58847" stroke-width="1.1"/><circle cx="2128.5" cy="1489.5" r="5.2" fill="#f69343" fill-opacity="0.42" stroke="#f69343" stroke-width="1.1"/><circle cx="2159.6" cy="1513.9" r="5.2" fill="#f57d4b" fill-opacity="0.42" stroke="#f57d4b" stroke-width="1.1"/><circle cx="2172.7" cy="1499.6" r="5.2" fill="#f58a46" fill-opacity="0.42" stroke="#f58a46" stroke-width="1.1"/><circle cx="2191.7" cy="1459.1" r="5.2" fill="#f8b03a" fill-opacity="0.42" stroke="#f8b03a" stroke-width="1.1"/><circle cx="2204.8" cy="1514.1" r="5.2" fill="#f57d4b" fill-opacity="0.42" stroke="#f57d4b" stroke-width="1.1"/><circle cx="2232.5" cy="1534.5" r="5.2" fill="#f46a51" fill-opacity="0.42" stroke="#f46a51" stroke-width="1.1"/><circle cx="2259.1" cy="1526.7" r="5.2" fill="#f4714f" fill-opacity="0.42" stroke="#f4714f" stroke-width="1.1"/><circle cx="2274.1" cy="1524.2" r="5.2" fill="#f4734e" fill-opacity="0.42" stroke="#f4734e" stroke-width="1.1"/><circle cx="2294.8" cy="1516.1" r="5.2" fill="#f57b4b" fill-opacity="0.42" stroke="#f57b4b" stroke-width="1.1"/><circle cx="2317.2" cy="1523.4" r="5.2" fill="#f4744e" fill-opacity="0.42" stroke="#f4744e" stroke-width="1.1"/><circle cx="2366" cy="1543.5" r="5.2" fill="#f36154" fill-opacity="0.42" stroke="#f36154" stroke-width="1.1"/><circle cx="2447.3" cy="1503.9" r="5.2" fill="#f58648" fill-opacity="0.42" stroke="#f58648" stroke-width="1.1"/><circle cx="2478.9" cy="1524.3" r="5.2" fill="#f4734e" fill-opacity="0.42" stroke="#f4734e" stroke-width="1.1"/><circle cx="2508" cy="1524" r="5.2" fill="#f4734e" fill-opacity="0.42" stroke="#f4734e" stroke-width="1.1"/><circle cx="2524.2" cy="1526.2" r="5.2" fill="#f4714e" fill-opacity="0.42" stroke="#f4714e" stroke-width="1.1"/><circle cx="2538.1" cy="1515.9" r="5.2" fill="#f57b4b" fill-opacity="0.42" stroke="#f57b4b" stroke-width="1.1"/><circle cx="2552.4" cy="1524" r="5.2" fill="#f4734e" fill-opacity="0.42" stroke="#f4734e" stroke-width="1.1"/><circle cx="2566.4" cy="1536.3" r="5.2" fill="#f46852" fill-opacity="0.42" stroke="#f46852" stroke-width="1.1"/><circle cx="2587.9" cy="1524" r="5.2" fill="#f4734e" fill-opacity="0.42" stroke="#f4734e" stroke-width="1.1"/><circle cx="2606.9" cy="1526.2" r="5.2" fill="#f4714e" fill-opacity="0.42" stroke="#f4714e" stroke-width="1.1"/><circle cx="2633.2" cy="1526.2" r="5.2" fill="#f4714e" fill-opacity="0.42" stroke="#f4714e" stroke-width="1.1"/><circle cx="2641.6" cy="1526.2" r="5.2" fill="#f4714e" fill-opacity="0.42" stroke="#f4714e" stroke-width="1.1"/><circle cx="2654.1" cy="1534.3" r="5.2" fill="#f46a51" fill-opacity="0.42" stroke="#f46a51" stroke-width="1.1"/><circle cx="2675.1" cy="1526.2" r="5.2" fill="#f4714e" fill-opacity="0.42" stroke="#f4714e" stroke-width="1.1"/><circle cx="2694.4" cy="1526.2" r="5.2" fill="#f4714e" fill-opacity="0.42" stroke="#f4714e" stroke-width="1.1"/><circle cx="2713.1" cy="1524" r="5.2" fill="#f4734e" fill-opacity="0.42" stroke="#f4734e" stroke-width="1.1"/><circle cx="2726" cy="1515.9" r="5.2" fill="#f57b4b" fill-opacity="0.42" stroke="#f57b4b" stroke-width="1.1"/><circle cx="2752.2" cy="1526.2" r="5.2" fill="#f4714e" fill-opacity="0.42" stroke="#f4714e" stroke-width="1.1"/><circle cx="2795.3" cy="1522.3" r="5.2" fill="#f4754d" fill-opacity="0.42" stroke="#f4754d" stroke-width="1.1"/><circle cx="2852" cy="1491.8" r="5.2" fill="#f69144" fill-opacity="0.42" stroke="#f69144" stroke-width="1.1"/><circle cx="2907.4" cy="1528.7" r="5.2" fill="#f46f4f" fill-opacity="0.42" stroke="#f46f4f" stroke-width="1.1"/><circle cx="2953.7" cy="1534.3" r="5.2" fill="#f46a51" fill-opacity="0.42" stroke="#f46a51" stroke-width="1.1"/><circle cx="2967.2" cy="1515.9" r="5.2" fill="#f57b4b" fill-opacity="0.42" stroke="#f57b4b" stroke-width="1.1"/><circle cx="2980" cy="1526.2" r="5.2" fill="#f4714e" fill-opacity="0.42" stroke="#f4714e" stroke-width="1.1"/><circle cx="2992.9" cy="1526.2" r="5.2" fill="#f4714e" fill-opacity="0.42" stroke="#f4714e" stroke-width="1.1"/><circle cx="3016.1" cy="1526.2" r="5.2" fill="#f4714e" fill-opacity="0.42" stroke="#f4714e" stroke-width="1.1"/><circle cx="3034.4" cy="1526.2" r="5.2" fill="#f4714e" fill-opacity="0.42" stroke="#f4714e" stroke-width="1.1"/><circle cx="3047.8" cy="1526.2" r="5.2" fill="#f4714e" fill-opacity="0.42" stroke="#f4714e" stroke-width="1.1"/><circle cx="3067.1" cy="1526.2" r="5.2" fill="#f4714e" fill-opacity="0.42" stroke="#f4714e" stroke-width="1.1"/><circle cx="3080.2" cy="1526.2" r="5.2" fill="#f4714e" fill-opacity="0.42" stroke="#f4714e" stroke-width="1.1"/><circle cx="3093.1" cy="1534.3" r="5.2" fill="#f46a51" fill-opacity="0.42" stroke="#f46a51" stroke-width="1.1"/><circle cx="3108.2" cy="1526.2" r="5.2" fill="#f4714e" fill-opacity="0.42" stroke="#f4714e" stroke-width="1.1"/><circle cx="3124.4" cy="1524.3" r="5.2" fill="#f4734e" fill-opacity="0.42" stroke="#f4734e" stroke-width="1.1"/><circle cx="3137.2" cy="1526.2" r="5.2" fill="#f4714e" fill-opacity="0.42" stroke="#f4714e" stroke-width="1.1"/><circle cx="3161.3" cy="1569.5" r="5.2" fill="#f2495c" fill-opacity="0.42" stroke="#f2495c" stroke-width="1.1"/><circle cx="3206.3" cy="1543" r="5.2" fill="#f36254" fill-opacity="0.42" stroke="#f36254" stroke-width="1.1"/><circle cx="3232.3" cy="1526.2" r="5.2" fill="#f4714e" fill-opacity="0.42" stroke="#f4714e" stroke-width="1.1"/><circle cx="3251.3" cy="1536.3" r="5.2" fill="#f46852" fill-opacity="0.42" stroke="#f46852" stroke-width="1.1"/><circle cx="3282" cy="1544.9" r="5.2" fill="#f36054" fill-opacity="0.42" stroke="#f36054" stroke-width="1.1"/><circle cx="3280.1" cy="1555.6" r="5.2" fill="#f35658" fill-opacity="0.42" stroke="#f35658" stroke-width="1.1"/><circle cx="3297.9" cy="1552.8" r="5.2" fill="#f35957" fill-opacity="0.42" stroke="#f35957" stroke-width="1.1"/><circle cx="3310.8" cy="1552.8" r="5.2" fill="#f35957" fill-opacity="0.42" stroke="#f35957" stroke-width="1.1"/><circle cx="3331.2" cy="1552.8" r="5.2" fill="#f35957" fill-opacity="0.42" stroke="#f35957" stroke-width="1.1"/><circle cx="3344.3" cy="1552.8" r="5.2" fill="#f35957" fill-opacity="0.42" stroke="#f35957" stroke-width="1.1"/><circle cx="3358.9" cy="1556.4" r="5.2" fill="#f35558" fill-opacity="0.42" stroke="#f35558" stroke-width="1.1"/><circle cx="3388.5" cy="1561.1" r="5.2" fill="#f25159" fill-opacity="0.42" stroke="#f25159" stroke-width="1.1"/></g>
<polyline points="223.8,1351.4 350.1,1298.3 550.8,1297.7 590.7,1282 804.6,1367.3 873.6,1359.2 1007.6,1374.9 1116.6,1374.9 1231.8,1398.1 1345.8,1398.1 1533.1,1421.6 1682.5,1413.5 1748.1,1444.8 1892.9,1436.7 1966.1,1467.7 2064,1498.5 2191.1,1522.2 2423,1521.2 2537.6,1529.6 3107.6,1529.6 3251.6,1552.8 3357.8,1560.6" fill="none" stroke="#c4162a" stroke-width="4" stroke-linejoin="round"/>
</svg></body></html>
